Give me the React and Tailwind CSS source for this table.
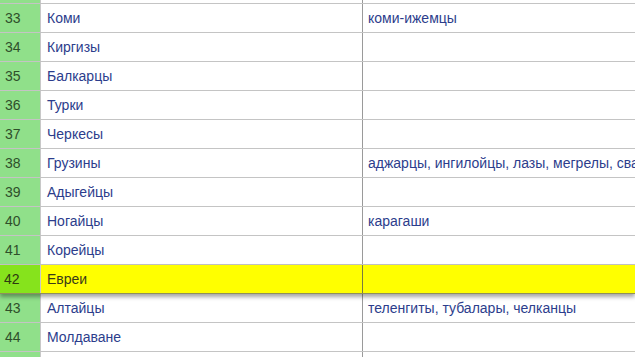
const rows = [
  ['33', 'Коми', 'коми-ижемцы'],
  ['34', 'Киргизы', ''],
  ['35', 'Балкарцы', ''],
  ['36', 'Турки', ''],
  ['37', 'Черкесы', ''],
  ['38', 'Грузины', 'аджарцы, ингилойцы, лазы, мегрелы, сваны'],
  ['39', 'Адыгейцы', ''],
  ['40', 'Ногайцы', 'карагаши'],
  ['41', 'Корейцы', ''],
  ['42', 'Евреи', ''],
  ['43', 'Алтайцы', 'теленгиты, тубалары, челканцы'],
  ['44', 'Молдаване', ''],
  ['', '', ''],
]

export default function App() {
  return (
    <div
      className="w-[635px] h-[357px] overflow-hidden bg-white text-[14px]"
      style={{ fontFamily: '"Liberation Sans", Arial, sans-serif' }}
    >
      <div className="flex h-[4px] border-b border-[#c4c4c4]">
        <div className="w-[41px] bg-[#90e08a] border-r border-[#c8c8c8]" />
        <div className="w-[322px] border-r border-[#9a9a9a]" />
        <div className="flex-1" />
      </div>
      {rows.map(([n, name, sub], i) => {
        const hi = n === '42'
        return (
          <div
            key={i}
            className={
              hi
                ? 'relative z-10 flex h-[29px] border-b border-[#8f8f5a] shadow-[0_3px_4px_rgba(0,0,0,0.35)]'
                : 'flex h-[29px] border-b border-[#c4c4c4]'
            }
          >
            <div
              className={
                hi
                  ? 'w-[41px] pl-[4px] flex items-center bg-[#86e31c] text-[#2d3a10] border-r border-[#c8c8c8]'
                  : 'w-[41px] pl-[5px] flex items-center bg-[#90e08a] text-[#2f4f2a] border-r border-[#c8c8c8]'
              }
            >
              {n}
            </div>
            <div
              className={
                hi
                  ? 'w-[322px] pl-[6px] flex items-center bg-[#ffff00] text-[#3a3a1a] border-r border-[#7a7a40]'
                  : 'w-[322px] pl-[6px] flex items-center text-[#2c3d8c] border-r border-[#9a9a9a]'
              }
            >
              {name}
            </div>
            <div
              className={
                hi
                  ? 'flex-1 pl-[5px] flex items-center bg-[#ffff00] whitespace-nowrap overflow-hidden'
                  : 'flex-1 pl-[5px] flex items-center text-[#2c3d8c] whitespace-nowrap overflow-hidden'
              }
            >
              {sub}
            </div>
          </div>
        )
      })}
    </div>
  )
}
